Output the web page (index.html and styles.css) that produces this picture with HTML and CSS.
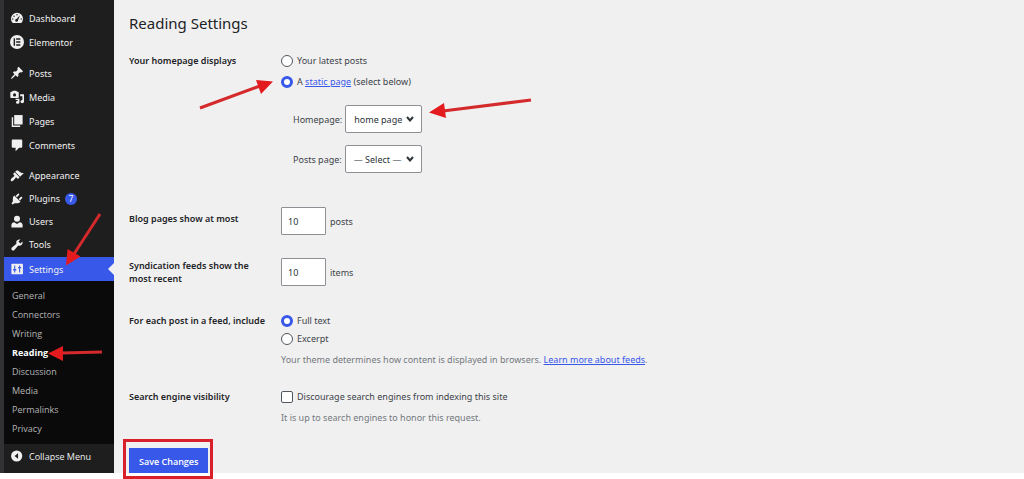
FILE: index.html
```html
<!DOCTYPE html>
<html lang="en">
<head>
<meta charset="utf-8">
<meta name="viewport" content="width=device-width, initial-scale=1">
<title>Reading Settings</title>
<link rel="stylesheet" href="styles.css">
</head>
<body>
<div class="admin">
  <nav class="sidebar" aria-label="Main menu">
    <ul class="menu">
      <li><a class="item" href="#"><svg class="icon" viewBox="0 0 20 20"><path fill-rule="evenodd" d="M3.800 17A8.600 8.600 0 1 1 16.200 17zM10 4.400a1 1 0 1 0 0 2 1 1 0 0 0 0-2zM5.800 6.400a1 1 0 1 0 0 2 1 1 0 0 0 0-2zM4 10.400a1 1 0 1 0 0 2 1 1 0 0 0 0-2zM16 10.400a1 1 0 1 0 0 2 1 1 0 0 0 0-2zM14.400 6.200L9.400 11.500a2 2 0 1 0 2 1.700z"/></svg>Dashboard</a></li>
      <li><a class="item" href="#"><svg class="icon" viewBox="0 0 20 20"><circle cx="10" cy="10" r="10"/><path class="cut" d="M5.200 4.800h2v10.400h-2zM8.800 4.800h6v1.900h-6zM8.800 9.050h6v1.900h-6zM8.800 13.300h6v1.900h-6z"/></svg>Elementor</a></li>
    </ul>
    <ul class="menu">
      <li><a class="item" href="#"><svg class="icon" viewBox="0 0 20 20"><path d="M10.440 3.020l1.820-1.820 6.360 6.350-1.830 1.820c-1.050-.680-2.480-.570-3.410.360l-.750.750c-.920.930-1.040 2.350-.350 3.410l-1.830 1.820-2.410-2.410-2.800 2.790c-.420.420-3.380 2.710-3.800 2.290s1.860-3.390 2.280-3.810l2.790-2.790L4.100 9.360l1.830-1.820c1.050.690 2.480.570 3.400-.360l.750-.750c.930-.920 1.050-2.350.360-3.410z"/></svg>Posts</a></li>
      <li><a class="item" href="#"><svg class="icon" viewBox="0 0 20 20"><path fill-rule="evenodd" d="M1.500 2.500H3L4 1h5l1 1.500h1.500q1 0 1 1V10.500q0 1-1 1h-10q-1 0-1-1v-7q0-1 1-1zM6.500 4.800a2.200 2.200 0 1 0 0 4.400 2.200 2.200 0 0 0 0-4.400z"/><path d="M14.500 6H20v10.500a2.500 2.300 0 1 1-2.300-2.300V9h-3.200zM8 12.500h5.500v5a2.500 2.300 0 1 1-2.300-2.300v-1H8z"/></svg>Media</a></li>
      <li><a class="item" href="#"><svg class="icon" viewBox="0 0 20 20"><path d="M6 1.500h12V15H6z"/><path d="M2.500 4.500h2v12h10v2h-12z"/></svg>Pages</a></li>
      <li><a class="item" href="#"><svg class="icon" viewBox="0 0 20 20"><path d="M4 2h12q1.500 0 1.500 1.500v9q0 1.500-1.500 1.500h-3l-5 5V14H4q-1.500 0-1.500-1.500v-9Q2.500 2 4 2z"/></svg>Comments</a></li>
    </ul>
    <ul class="menu menu-tight">
      <li><a class="item" href="#"><svg class="icon" viewBox="0 0 20 20"><path d="M14.480 11.060L7.410 3.990l1.500-1.500c.500-.560 2.300-.470 3.510.320 1.210.800 1.430 1.280 2.910 2.100 1.180.640 2.450 1.260 4.450.850zm-.710.710L6.700 4.700 4.930 6.470c-.390.390-.390 1.020 0 1.410l1.060 1.060c.390.390.390 1.030 0 1.420-.600.600-1.430 1.110-2.210 1.690-.350.260-.700.530-1.010.840C1.430 14.230.400 16.080 1.400 17.070c.990 1 2.840-.030 4.180-1.360.310-.310.580-.660.850-1.020.570-.780 1.080-1.610 1.690-2.210.390-.390 1.020-.390 1.410 0l1.060 1.060c.390.390 1.020.390 1.410 0z"/></svg>Appearance</a></li>
      <li><a class="item" href="#"><svg class="icon" viewBox="0 0 20 20"><path d="M13.110 4.360L9.870 7.600 8 5.730l3.240-3.240c.350-.340 1.050-.200 1.560.320.520.510.660 1.210.310 1.550zm-8 1.770l.910-1.120 9.010 9.010-1.190.840c-.710.710-2.630 1.160-3.820 1.160H6.140L4.900 17.260c-.590.590-1.540.590-2.120 0-.590-.580-.590-1.530 0-2.120l1.240-1.240v-3.880c0-1.130.400-3.190 1.090-3.890zm7.260 3.970l3.240-3.240c.340-.350 1.040-.210 1.550.310.520.510.660 1.210.31 1.550l-3.240 3.250z"/></svg>Plugins<span class="badge">7</span></a></li>
      <li><a class="item" href="#"><svg class="icon" viewBox="0 0 20 20"><circle cx="10" cy="5.500" r="4.300"/><path d="M2 18v-3.500Q2 11 6 10.500l4 2.500 4-2.500q4 .500 4 4V18z"/></svg>Users</a></li>
      <li><a class="item" href="#"><svg class="icon" viewBox="0 0 20 20"><path d="M16.680 9.770c-1.340 1.340-3.300 1.670-4.950.990l-5.410 6.520c-.990.990-2.590.990-3.580 0s-.990-2.590 0-3.570l6.520-5.420c-.680-1.650-.350-3.610.990-4.950 1.280-1.280 3.120-1.620 4.720-1.060l-2.890 2.890 2.820 2.820 2.860-2.870c.530 1.580.180 3.390-1.080 4.650z"/></svg>Tools</a></li>
    </ul>
    <a class="item current" href="#"><svg class="icon" viewBox="0 0 20 20"><path d="M3 2.500h14.500q1 0 1 1v13q0 1-1 1H3q-1 0-1-1v-13q0-1 1-1z"/><path class="cut-blue" d="M6 5h1.500v5H9v2H7.500v3H6v-3H4.500v-2H6zM13 5h1.500v2H16v2h-1.500v6H13V9h-1.500V7H13z"/></svg>Settings</a>
    <ul class="submenu">
      <li><a href="#">General</a></li>
      <li><a href="#">Connectors</a></li>
      <li><a href="#">Writing</a></li>
      <li><a class="active" href="#" aria-current="page">Reading</a></li>
      <li><a href="#">Discussion</a></li>
      <li><a href="#">Media</a></li>
      <li><a href="#">Permalinks</a></li>
      <li><a href="#">Privacy</a></li>
    </ul>
    <button class="item collapse" type="button"><svg class="icon" viewBox="0 0 20 20"><circle cx="9.500" cy="10" r="8"/><path class="cut" d="M11.500 6v8L6.500 10z"/></svg>Collapse Menu</button>
  </nav>

  <main class="content">
    <h1>Reading Settings</h1>
    <form>
      <div class="row row-home">
        <div class="term" id="home-term">Your homepage displays</div>
        <div class="choices" role="radiogroup" aria-labelledby="home-term">
          <label class="choice"><input type="radio" name="front"><span>Your latest posts</span></label>
          <label class="choice"><input type="radio" name="front" checked><span>A <a href="#">static page</a> (select below)</span></label>
          <div class="pickers">
            <div class="picker">
              <label for="home">Homepage:</label>
              <span class="select"><select id="home"><option>home page</option></select><svg viewBox="0 0 10 10"><path d="M2 3l3 3.500L8 3"/></svg></span>
            </div>
            <div class="picker">
              <label for="posts">Posts page:</label>
              <span class="select"><select id="posts"><option>— Select —</option></select><svg viewBox="0 0 10 10"><path d="M2 3l3 3.500L8 3"/></svg></span>
            </div>
          </div>
        </div>
      </div>
      <div class="row row-count">
        <label class="term term-drop" for="count">Blog pages show at most</label>
        <div class="amount"><input id="count" type="text" inputmode="numeric" value="10"><span>posts</span></div>
      </div>
      <div class="row row-feeds">
        <label class="term" for="feeds">Syndication feeds show the most recent</label>
        <div class="amount"><input id="feeds" type="text" inputmode="numeric" value="10"><span>items</span></div>
      </div>
      <div class="row row-include">
        <div class="term" id="include-term">For each post in a feed, include</div>
        <div class="choices choices-close" role="radiogroup" aria-labelledby="include-term">
          <label class="choice"><input type="radio" name="feed" checked><span>Full text</span></label>
          <label class="choice"><input type="radio" name="feed"><span>Excerpt</span></label>
          <p class="hint">Your theme determines how content is displayed in browsers. <a href="#">Learn more about feeds</a>.</p>
        </div>
      </div>
      <div class="row row-search">
        <div class="term">Search engine visibility</div>
        <div class="choices choices-close">
          <label class="choice"><input type="checkbox"><span>Discourage search engines from indexing this site</span></label>
          <p class="hint">It is up to search engines to honor this request.</p>
        </div>
      </div>
      <div class="submit"><button class="save" type="submit">Save Changes</button></div>
    </form>
  </main>
</div>
<svg class="arrows" width="540" height="370" viewBox="0 0 540 370" aria-hidden="true">
  <path class="shaft" d="M200 108L260 86M531 100L443 111M100 214L74 254M102 352L62 353"/>
  <path d="M273 81.500L256 80l5 14zM429 112.500L444 103l2 15zM66 265.500L67.500 249l13 7.500zM48 353.500L63 346v15z"/>
</svg>
</body>
</html>
```
FILE: styles.css
```css
* {
  box-sizing: border-box;
}

body {
  margin: 0;
  padding-bottom: 6px;
  background: #fff;
  color: #3c434a;
  font-family: "Noto Sans", "Open Sans", sans-serif;
  font-size: 9px;
  line-height: 13px;
}

ul, p, h1 {
  margin: 0;
  padding: 0;
}

ul {
  list-style: none;
}

input, select, button {
  margin: 0;
  font: inherit;
  color: inherit;
}

a {
  color: #3858e9;
}

.admin {
  display: flex;
  background: #f0f0f0;
}

/* Sidebar */

.sidebar {
  flex: none;
  width: 114px;
  padding-top: 6px;
  border-left: 4px solid #323234;
  background: #1e1e1e;
}

.menu {
  padding-bottom: 7px;
}

.menu-tight {
  padding-bottom: 1px;
}

.item {
  display: flex;
  align-items: center;
  gap: 5px;
  width: 100%;
  height: 24px;
  padding: 0 0 0 6px;
  border: 0;
  background: none;
  color: #f0f0f1;
  text-decoration: none;
}

.menu-tight .item {
  height: 23px;
}

.icon {
  flex: none;
  width: 14px;
  height: 14px;
  fill: #f0f0f1;
}

.icon .cut {
  fill: #1e1e1e;
}

.icon .cut-blue {
  fill: #3858e9;
}

.badge {
  width: 12px;
  height: 12px;
  border-radius: 6px;
  background: #3858e9;
  color: #fff;
  font-size: 8px;
  line-height: 12px;
  text-align: center;
}

.current {
  position: relative;
  background: #3858e9;
}

.current::after {
  content: "";
  position: absolute;
  top: 6px;
  right: 0;
  border: 6px solid transparent;
  border-left-width: 0;
  border-right-color: #f0f0f0;
}

.submenu {
  padding: 5px 0 6px 8px;
  background: #0a0a0a;
}

.submenu a {
  display: block;
  color: #b4b4b6;
  font-family: "Open Sans", sans-serif;
  line-height: 19px;
  text-decoration: none;
}

.submenu .active {
  color: #fff;
  font-weight: 700;
}

.collapse {
  font-family: "Open Sans", sans-serif;
}

/* Settings form */

.content {
  flex: 1;
  display: flex;
  flex-direction: column;
  padding: 13px 15px 0;
}

h1 {
  margin-bottom: 21px;
  color: #1d2327;
  font-size: 15px;
  font-weight: 400;
  line-height: 20px;
}

.row {
  display: grid;
  grid-template-columns: 140px 1fr;
  column-gap: 12px;
  align-items: start;
}

.row-home {
  margin-bottom: 34px;
}

.row-count {
  margin-bottom: 23px;
}

.row-feeds {
  align-items: center;
  margin-bottom: 28px;
}

.row-include {
  margin-bottom: 24px;
}

.row-search {
  margin-bottom: 24px;
}

.term {
  padding-right: 8px;
  color: #1d2327;
  font-weight: 600;
}

.row-include .term {
  padding-right: 0;
}

.term-drop {
  padding-top: 5px;
}

.choices {
  display: flex;
  flex-direction: column;
  align-items: flex-start;
  gap: 8px;
}

.choices-close {
  gap: 5px;
}

.choice {
  display: flex;
  align-items: center;
  gap: 4px;
}

.choice input {
  appearance: none;
  width: 12px;
  height: 12px;
  border: 1px solid #50575e;
  border-radius: 2px;
  background: #fff;
}

.choice input[type="radio"] {
  border-radius: 50%;
}

.choice input[type="radio"]:checked {
  border: 3px solid #3858e9;
}

.hint {
  padding-top: 3px;
  color: #74797f;
}

.pickers {
  display: flex;
  flex-direction: column;
  gap: 12px;
  padding: 9px 0 0 12px;
}

.picker {
  display: flex;
  align-items: center;
  gap: 3px;
}

.select {
  display: grid;
  align-items: center;
}

.select select,
.select svg {
  grid-area: 1 / 1;
}

.select select {
  appearance: none;
  width: 77px;
  height: 28px;
  padding: 0 0 0 8px;
  border: 1px solid #8c8f94;
  border-radius: 2px;
  background: #fff;
  color: #2c3338;
}

.select svg {
  justify-self: end;
  width: 10px;
  height: 10px;
  margin-right: 7px;
  fill: none;
  stroke: #2c3338;
  stroke-width: 2;
  pointer-events: none;
}

.amount {
  display: flex;
  align-items: center;
  gap: 4px;
}

.amount input {
  width: 45px;
  height: 28px;
  padding: 0 6px;
  border: 1px solid #8c8f94;
  border-radius: 1px;
  background: #fff;
  color: #2c3338;
}

.submit {
  position: relative;
  width: fit-content;
}

.submit::after {
  content: "";
  position: absolute;
  inset: -9px -5px -6px -6px;
  border: 3px solid #d9202a;
  pointer-events: none;
}

.save {
  display: block;
  height: 25px;
  padding: 2px 10px 0;
  border: 0;
  background: #3858e9;
  color: #fff;
  font-family: "Open Sans", sans-serif;
  font-weight: 600;
}

/* Callout arrows */

.arrows {
  position: absolute;
  top: 0;
  left: 0;
  fill: #e31b1f;
  pointer-events: none;
}

.arrows .shaft {
  fill: none;
  stroke: #d42a2c;
  stroke-width: 3;
}
```
